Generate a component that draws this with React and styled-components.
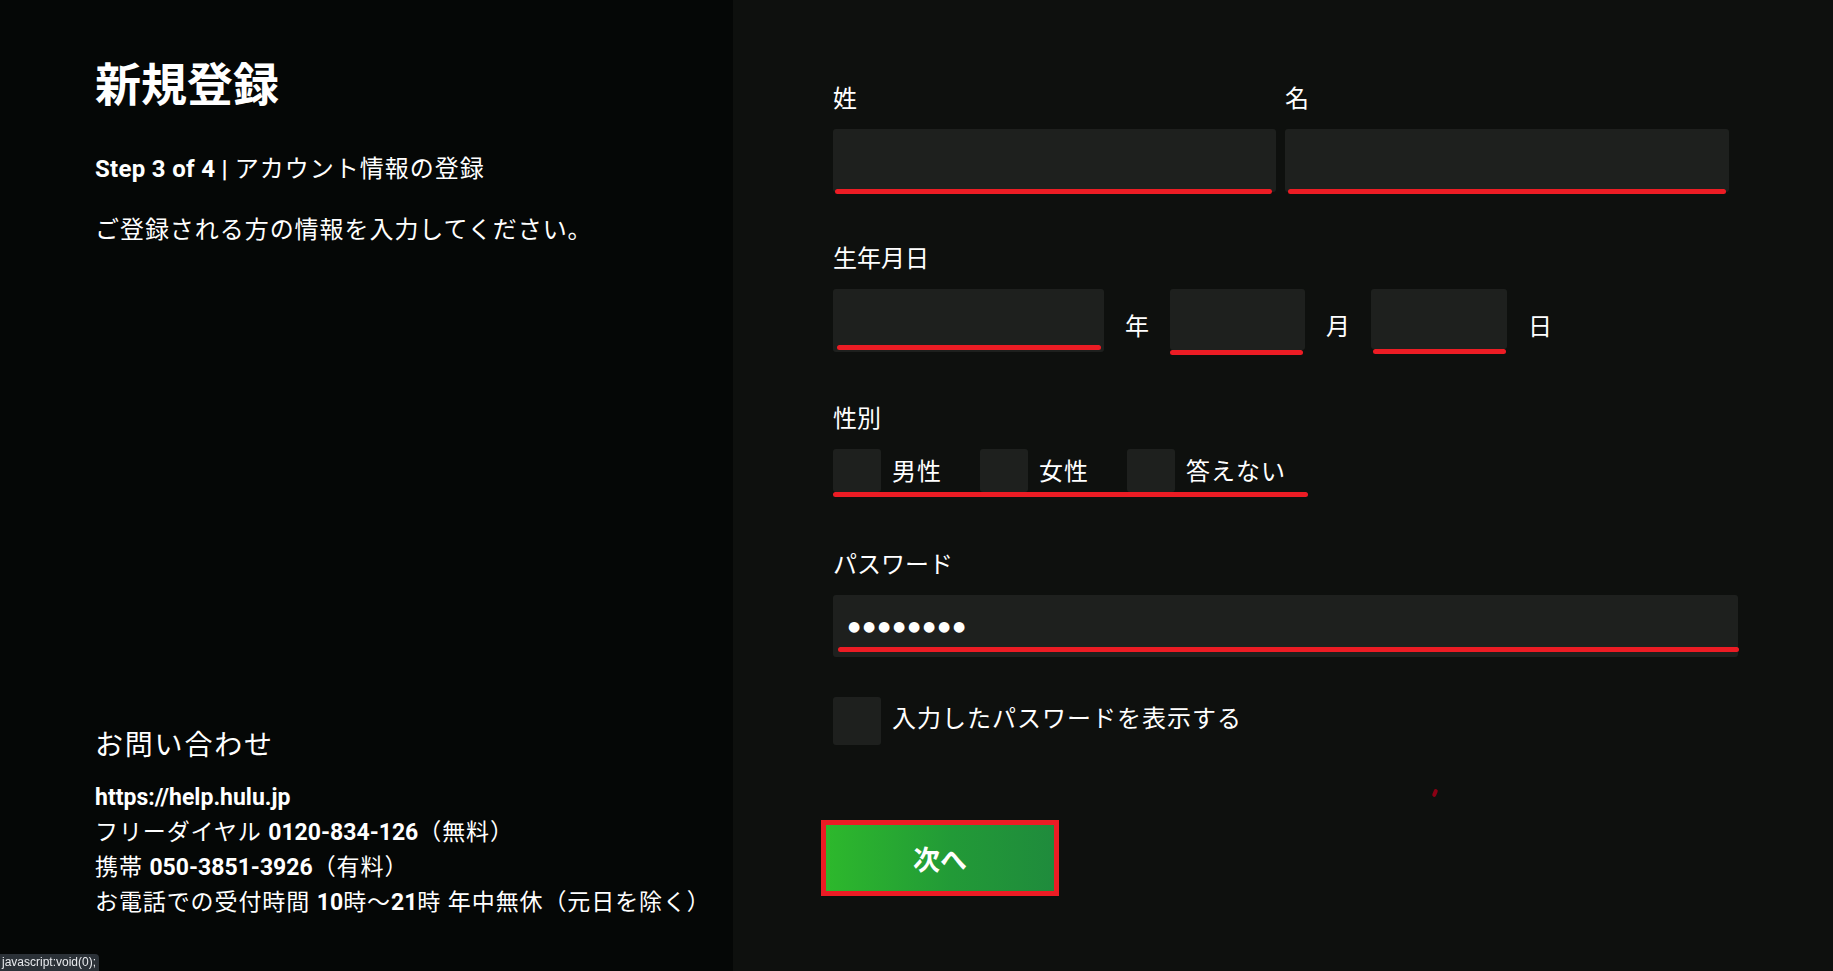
import React from 'react';
import styled, { createGlobalStyle } from 'styled-components';

const GlobalStyle = createGlobalStyle`
  html, body {
    margin: 0;
    padding: 0;
    background: #0e100e;
  }

  body {
    font-family: Roboto, "Noto Sans CJK JP", sans-serif;
    color: #fff;
  }
`;

const Page = styled.div`
  display: flex;
  min-height: 971px;
`;

const Side = styled.aside`
  width: 733px;
  flex-shrink: 0;
  box-sizing: border-box;
  background: #050706;
  padding: 57px 0 51px 95px;
  display: flex;
  flex-direction: column;
  justify-content: space-between;
`;

const Title = styled.h1`
  margin: 0;
  font-size: 46px;
  line-height: 56px;
  font-weight: 700;
`;

const Step = styled.p`
  margin: 40px 0 0;
  font-size: 24px;
  line-height: 32px;
  letter-spacing: 1px;

  b {
    font-weight: 700;
    letter-spacing: 0.3px;
  }
`;

const Lead = styled.p`
  margin: 29px 0 0;
  font-size: 24px;
  line-height: 32px;
  letter-spacing: 0.95px;
`;

const ContactTitle = styled.h2`
  margin: 0 0 16px;
  font-size: 28px;
  line-height: 36px;
  font-weight: 400;
  letter-spacing: 1.8px;
`;

const ContactLine = styled.div`
  font-size: 23px;
  line-height: 35px;
  letter-spacing: 0.9px;

  b {
    font-weight: 700;
    letter-spacing: 0;
  }
`;

const Main = styled.main`
  flex: 1;
  position: relative;
  box-sizing: border-box;
  padding: 83px 0 0 100px;
`;

const Form = styled.form`
  width: 905px;
  display: flex;
  flex-direction: column;
`;

const Label = styled.label`
  display: block;
  font-size: 24px;
  line-height: 32px;
  margin-bottom: ${p => p.$gap || 14}px;
`;

const Section = styled.div`
  margin-top: ${p => p.$top || 0}px;
`;

const NameRow = styled.div`
  display: grid;
  grid-template-columns: 443px 444px;
  column-gap: 9px;
`;

const NameCol = styled.div`
  display: flex;
  flex-direction: column;
`;

const Field = styled.div`
  position: relative;
  width: ${p => (p.$width ? `${p.$width}px` : 'auto')};
  height: ${p => p.$height || 63}px;
  box-sizing: border-box;
  background: #1e201e;
  border-radius: 3px;
  display: flex;
  align-items: center;
  padding-left: 16px;

  &::after {
    content: '';
    position: absolute;
    left: ${p => p.$lineLeft ?? 2}px;
    right: ${p => p.$lineRight ?? 4}px;
    bottom: ${p => p.$lineBottom ?? -2}px;
    height: 5px;
    border-radius: 3px;
    background: #ec1c24;
  }
`;

const DateRow = styled.div`
  display: flex;
  align-items: flex-start;
  height: 66px;
`;

const Unit = styled.span`
  font-size: 24px;
  line-height: 32px;
  margin: 22px 21px 0;
`;

const GenderGroup = styled.div`
  display: inline-flex;
  flex-direction: column;
  align-self: flex-start;
`;

const Options = styled.div`
  display: flex;
  gap: 38px;
  padding-right: 22px;
`;

const Option = styled.div`
  display: flex;
  align-items: center;
  gap: 11px;
`;

const Box = styled.span`
  width: 48px;
  height: ${p => p.$height || 48}px;
  background: #1e201e;
  border-radius: 3px;
  flex-shrink: 0;
`;

const OptionText = styled.span`
  font-size: 24px;
  line-height: 32px;
  letter-spacing: 1px;
  padding: ${p => (p.$raise ? '0 0 5px' : '2px 0 0')};
`;

const Underline = styled.div`
  height: 5px;
  border-radius: 3px;
  background: #ec1c24;
`;

const Dots = styled.span`
  font-family: "DejaVu Sans", sans-serif;
  font-size: 14px;
  letter-spacing: 2.8px;
  margin-left: -1px;
`;

const CheckRow = styled.div`
  display: flex;
  align-items: center;
  gap: 11px;
  margin-top: 40px;
`;

const NextButton = styled.button`
  margin: 80px 0 0 -7px;
  width: 228px;
  height: 66px;
  border: none;
  outline: 5px solid #ec1c24;
  background: linear-gradient(90deg, #2db82c 0%, #229a37 55%, #1f8b3c 100%);
  color: #fff;
  font-family: "Noto Sans CJK JP", sans-serif;
  font-size: 27px;
  font-weight: 700;
  cursor: pointer;
`;

const Speck = styled.span`
  position: absolute;
  left: 700px;
  top: 789px;
  width: 4px;
  height: 8px;
  border-radius: 2px;
  background: #8a0014;
  transform: rotate(22deg);
`;

const StatusBar = styled.div`
  position: fixed;
  left: 0;
  bottom: 0;
  height: 17px;
  padding: 0 3px 0 2px;
  background: #2b3137;
  border-top-right-radius: 4px;
  color: #e8eaed;
  font-family: "Liberation Sans", sans-serif;
  font-size: 12px;
  line-height: 17px;
`;

export default function App() {
  return (
    <>
      <GlobalStyle />
      <Page>
        <Side>
          <div>
            <Title>新規登録</Title>
            <Step>
              <b>Step 3 of 4 |</b> アカウント情報の登録
            </Step>
            <Lead>ご登録される方の情報を入力してください。</Lead>
          </div>
          <div>
            <ContactTitle>お問い合わせ</ContactTitle>
            <ContactLine>
              <b>https://help.hulu.jp</b>
            </ContactLine>
            <ContactLine>
              フリーダイヤル <b>0120-834-126</b>（無料）
            </ContactLine>
            <ContactLine>
              携帯 <b>050-3851-3926</b>（有料）
            </ContactLine>
            <ContactLine>
              お電話での受付時間 <b>10</b>時〜<b>21</b>時 年中無休（元日を除く）
            </ContactLine>
          </div>
        </Side>

        <Main>
          <Form onSubmit={e => e.preventDefault()}>
            <NameRow>
              <NameCol>
                <Label>姓</Label>
                <Field $lineBottom={-2} $lineRight={4} />
              </NameCol>
              <NameCol>
                <Label>名</Label>
                <Field $lineLeft={3} $lineRight={3} />
              </NameCol>
            </NameRow>

            <Section $top={51}>
              <Label $gap={14}>生年月日</Label>
              <DateRow>
                <Field $width={271} $height={63} $lineLeft={4} $lineRight={3} $lineBottom={2} />
                <Unit>年</Unit>
                <Field $width={135} $height={61} $lineLeft={0} $lineRight={2} $lineBottom={-5} />
                <Unit>月</Unit>
                <Field $width={136} $height={60} $lineLeft={2} $lineRight={1} $lineBottom={-5} />
                <Unit>日</Unit>
              </DateRow>
            </Section>

            <Section $top={48}>
              <Label $gap={14}>性別</Label>
              <GenderGroup>
                <Options>
                  <Option>
                    <Box $height={43} />
                    <OptionText>男性</OptionText>
                  </Option>
                  <Option>
                    <Box $height={43} />
                    <OptionText>女性</OptionText>
                  </Option>
                  <Option>
                    <Box $height={43} />
                    <OptionText>答えない</OptionText>
                  </Option>
                </Options>
                <Underline />
              </GenderGroup>
            </Section>

            <Section $top={52}>
              <Label $gap={14}>パスワード</Label>
              <Field $height={62} $lineLeft={5} $lineRight={-1} $lineBottom={5}>
                <Dots>●●●●●●●●</Dots>
              </Field>
            </Section>

            <CheckRow>
              <Box />
              <OptionText $raise>入力したパスワードを表示する</OptionText>
            </CheckRow>

            <div>
              <NextButton type="submit">次へ</NextButton>
            </div>
          </Form>
          <Speck />
        </Main>
      </Page>
      <StatusBar>javascript:void(0);</StatusBar>
    </>
  );
}
